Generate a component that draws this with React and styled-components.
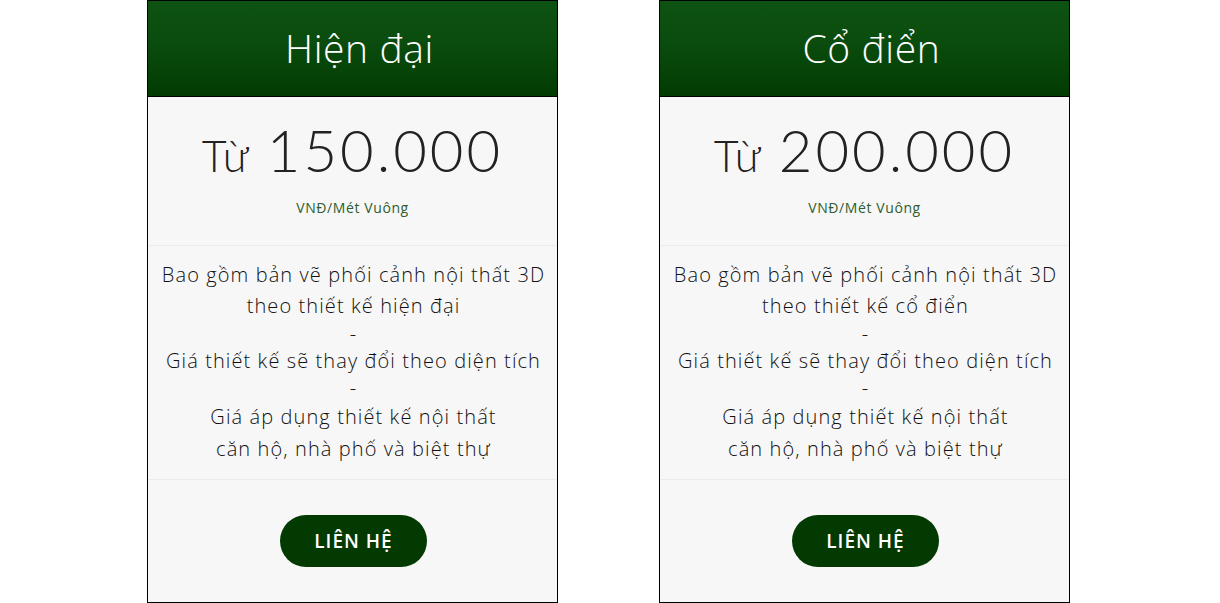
import React from "react";
import styled, { createGlobalStyle } from "styled-components";

const Global = createGlobalStyle`
  html, body { margin: 0; padding: 0; background: #ffffff; }
  body { font-family: "Open Sans", Lato, sans-serif; }
`;

const Page = styled.div`
  display: flex;
  justify-content: center;
  align-items: flex-start;
  gap: 101px;
  width: 1220px;
  height: 603px;
  padding-right: 3px;
  box-sizing: border-box;
`;

const Card = styled.div`
  width: 411px;
  height: 603px;
  box-sizing: border-box;
  border: 1px solid #000;
  background: #f7f7f7;
  display: flex;
  flex-direction: column;
`;

const Header = styled.div`
  height: 96px;
  box-sizing: border-box;
  border-bottom: 1px solid #000;
  background: linear-gradient(to bottom, #0e5313 0%, #0a4c0d 45%, #023b02 100%);
  display: flex;
  align-items: center;
  justify-content: center;
  color: #fff;
  font-family: "Open Sans", sans-serif;
  font-size: 39px;
  font-weight: 300;
  letter-spacing: 0.6px;
  padding: 0 0 2px 14px;
`;

const PriceBlock = styled.div`
  height: 149px;
  box-sizing: border-box;
  border-bottom: 1px solid #ebebeb;
  display: flex;
  flex-direction: column;
  align-items: center;
  padding-top: 18px;
`;

const Price = styled.div`
  display: flex;
  align-items: baseline;
  gap: 17px;
  color: #222;
  line-height: 70px;
  height: 70px;
  font-family: Lato, sans-serif;
`;

const From = styled.span`
  font-size: 43px;
  font-weight: 300;
  letter-spacing: 1px;
`;

const Amount = styled.span`
  font-size: 58px;
  font-weight: 300;
  letter-spacing: 3px;
`;

const Unit = styled.div`
  margin-top: 13px;
  font-size: 14px;
  font-weight: 400;
  color: #2f5d2f;
  letter-spacing: 0.6px;
`;

const Features = styled.div`
  height: 234px;
  box-sizing: border-box;
  border-bottom: 1px solid #ebebeb;
  display: flex;
  flex-direction: column;
  align-items: center;
  padding: 13px 0 0 2px;
  color: #111;
  font-size: 20px;
  font-weight: 300;
  letter-spacing: 1.1px;
`;

const Line = styled.div`
  height: ${(p) => p.$h}px;
  line-height: ${(p) => p.$h}px;
  white-space: nowrap;
`;

const ButtonArea = styled.div`
  flex: 1;
  display: flex;
  align-items: flex-start;
  justify-content: center;
  padding: 35px 0 0 2px;
`;

const Button = styled.button`
  width: 147px;
  height: 52px;
  border: none;
  border-radius: 26px;
  background: #023a02;
  color: #fff;
  font-family: "Open Sans", sans-serif;
  font-size: 19px;
  font-weight: 600;
  letter-spacing: 1px;
  cursor: pointer;
`;

const plans = [
  { title: "Hiện đại", price: "150.000", style: "hiện đại" },
  { title: "Cổ điển", price: "200.000", style: "cổ điển" },
];

export default function App() {
  return (
    <>
      <Global />
      <Page>
        {plans.map((p) => (
          <Card key={p.title}>
            <Header>{p.title}</Header>
            <PriceBlock>
              <Price>
                <From>Từ</From>
                <Amount>{p.price}</Amount>
              </Price>
              <Unit>VNĐ/Mét Vuông</Unit>
            </PriceBlock>
            <Features>
              <Line $h={32}>Bao gồm bản vẽ phối cảnh nội thất 3D</Line>
              <Line $h={30}>theo thiết kế {p.style}</Line>
              <Line $h={26}>-</Line>
              <Line $h={27}>Giá thiết kế sẽ thay đổi theo diện tích</Line>
              <Line $h={27}>-</Line>
              <Line $h={31}>Giá áp dụng thiết kế nội thất</Line>
              <Line $h={34}>căn hộ, nhà phố và biệt thự</Line>
            </Features>
            <ButtonArea>
              <Button>LIÊN HỆ</Button>
            </ButtonArea>
          </Card>
        ))}
      </Page>
    </>
  );
}
